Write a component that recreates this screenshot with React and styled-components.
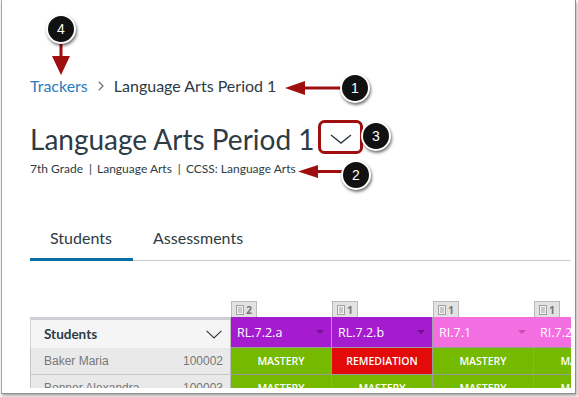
import React from "react";
import styled, { createGlobalStyle } from "styled-components";

const GlobalStyle = createGlobalStyle`
  html, body { margin: 0; padding: 0; background: #ffffff; }
  body { font-family: Lato, "Noto Sans", sans-serif; color: #2d3b45; }
  * { box-sizing: border-box; }
`;

const Page = styled.div`
  position: relative;
  width: 578px;
  height: 397px;
  overflow: hidden;
`;

const Frame = styled.div`
  margin-left: 1px;
  width: 575px;
  height: 394px;
  border-left: 1px solid #a6a6a6;
  border-right: 1px solid #8e8e8e;
  border-bottom: 1px solid #8e8e8e;
  box-shadow: 1px 2px 3px rgba(0, 0, 0, 0.35);
  padding: 0 4px 5px 0;
  background: #fff;
`;

const Viewport = styled.div`
  height: 100%;
  overflow: hidden;
  padding-left: 28px;
  display: flex;
  flex-direction: column;
`;

const Breadcrumb = styled.nav`
  margin-top: 76px;
  display: flex;
  align-items: center;
  height: 20px;
  font-size: 16px;
  line-height: 20px;
`;

const Crumb = styled.span`
  color: ${(p) => (p.$link ? "#2b7abc" : "#2d3b45")};
`;

const CrumbSep = styled.svg`
  width: 6px;
  height: 10px;
  margin: 0 10px;
`;

const TitleRow = styled.div`
  margin-top: 25px;
  display: flex;
  align-items: center;
  height: 36px;
`;

const Title = styled.h1`
  margin: 0;
  font-size: 28px;
  line-height: 36px;
  font-weight: 400;
  color: #2d3b45;
`;

const TitleToggle = styled.button`
  margin-left: 6px;
  width: 40px;
  height: 30px;
  border: none;
  background: transparent;
  padding: 0;
  display: flex;
  align-items: center;
  justify-content: center;
`;

const Meta = styled.div`
  margin-top: 4px;
  font-size: 12px;
  line-height: 16px;
  color: #2d3b45;
  display: flex;
`;

const MetaSep = styled.span`
  padding: 0 5px 0 6px;
`;

const TabList = styled.div`
  margin-top: 51px;
  display: flex;
  border-bottom: 1px solid #c7cdd1;
`;

const Tab = styled.div`
  padding: 0 20px 10px;
  font-size: 16px;
  line-height: 20px;
  color: #2d3b45;
  border-bottom: 3px solid ${(p) => (p.$active ? "#0770a3" : "transparent")};
  margin-bottom: -1px;
  width: ${(p) => (p.$w ? `${p.$w}px` : "auto")};
`;

const Table = styled.div`
  margin-top: 38px;
  display: flex;
  flex-direction: column;
  width: max-content;
  flex-shrink: 0;
`;

const BadgeRow = styled.div`
  display: flex;
  height: 18px;
  padding-left: 201px;
`;

const BadgeSlot = styled.div`
  width: 101px;
`;

const Badge = styled.div`
  display: inline-flex;
  align-items: center;
  gap: 2px;
  height: 18px;
  padding: 0 4px 0 4px;
  background: #e2e2e2;
  border: 1px solid #b9b9b9;
  border-bottom: none;
  font-family: "Open Sans", sans-serif;
  font-weight: 700;
  font-size: 10.5px;
  color: #777777;
`;

const Row = styled.div`
  display: flex;
`;

const StudentHead = styled.div`
  width: 201px;
  height: 31px;
  border-top: 3px solid #ccd0d4;
  border-left: 1px solid #d6d6d6;
  border-right: 1px solid #bdbdbd;
  background: #f5f5f6;
  display: flex;
  align-items: center;
  justify-content: space-between;
  padding: 0 8px 0 13px;
  font-weight: 700;
  font-size: 13.5px;
  color: #2d3b45;
`;

const colColor = { purple: "#a51ccf", pink: "#f36ee0" };
const arrowColor = { purple: "rgba(60,0,80,0.45)", pink: "rgba(120,20,100,0.35)" };

const ColHead = styled.div`
  width: 101px;
  height: 31px;
  background: ${(p) => colColor[p.$tone]};
  border-right: 1px solid #a3a3a3;
  border-bottom: 1px solid #9c9c9c;
  display: flex;
  align-items: center;
  justify-content: space-between;
  padding: 0 7px 0 6px;
  font-family: "Open Sans", sans-serif;
  font-size: 12.5px;
  color: #ffffff;
`;

const HeadCaret = styled.span`
  width: 0;
  height: 0;
  border-left: 4px solid transparent;
  border-right: 4px solid transparent;
  border-top: 4px solid ${(p) => arrowColor[p.$tone]};
`;

const StudentCell = styled.div`
  width: 201px;
  height: 27px;
  background: #e9e9e9;
  border-left: 1px solid #c6c6c6;
  border-right: 1px solid #bdbdbd;
  border-bottom: 1px solid #c8c8c8;
  display: flex;
  align-items: center;
  justify-content: space-between;
  padding: 0 7px 0 13px;
  font-family: "Liberation Sans", Arial, sans-serif;
  font-size: 12px;
  color: #777777;
  white-space: nowrap;
`;

const resultColor = { mastery: "#75b900", remediation: "#e30a0a" };

const ResultCell = styled.div`
  width: 101px;
  height: 27px;
  background: ${(p) => resultColor[p.$result]};
  border-right: 1px solid #9a9a9a;
  border-bottom: 1px solid #9a9a9a;
  display: flex;
  align-items: center;
  justify-content: center;
  font-family: "Open Sans", sans-serif;
  font-weight: 600;
  font-size: 10.5px;
  color: #ffffff;
  text-transform: uppercase;
`;

/* annotation overlay */
const Overlay = styled.svg`
  position: absolute;
  left: 0;
  top: 0;
  width: 578px;
  height: 397px;
  pointer-events: none;
`;

const Callout = styled.div`
  position: absolute;
  left: ${(p) => p.$x - 15}px;
  top: ${(p) => p.$y - 15}px;
  width: 30px;
  height: 30px;
  border-radius: 50%;
  background: #111111;
  border: 2px solid #ffffff;
  box-shadow: 1px 2px 3px rgba(0, 0, 0, 0.55);
  color: #ffffff;
  font-family: "Liberation Sans", Arial, sans-serif;
  font-size: 14px;
  display: flex;
  align-items: center;
  justify-content: center;
`;

const columns = [
  { code: "RL.7.2.a", count: 2, tone: "purple" },
  { code: "RL.7.2.b", count: 1, tone: "purple" },
  { code: "RI.7.1", count: 1, tone: "pink" },
  { code: "RI.7.2", count: 1, tone: "pink" },
];

const students = [
  { name: "Baker Maria", id: "100002", results: ["mastery", "remediation", "mastery", "mastery"] },
  { name: "Bonner Alexandra", id: "100003", results: ["mastery", "mastery", "mastery", "mastery"] },
];

const DocIcon = () => (
  <svg width="8" height="10" viewBox="0 0 8 10">
    <rect x="0.5" y="0.5" width="7" height="9" fill="#f2f2f2" stroke="#a0a0a0" />
    <line x1="2" y1="3" x2="6" y2="3" stroke="#a0a0a0" />
    <line x1="2" y1="5" x2="6" y2="5" stroke="#a0a0a0" />
    <line x1="2" y1="7" x2="6" y2="7" stroke="#a0a0a0" />
  </svg>
);

const RED = "#a00f0f";

export default function App() {
  return (
    <Page>
      <GlobalStyle />
      <Frame>
        <Viewport>
          <Breadcrumb>
            <Crumb $link>Trackers</Crumb>
            <CrumbSep viewBox="0 0 6 10">
              <path d="M0.8 0.8 L5 5 L0.8 9.2" fill="none" stroke="#6b7780" strokeWidth="1.3" />
            </CrumbSep>
            <Crumb>Language Arts Period 1</Crumb>
          </Breadcrumb>
          <TitleRow>
            <Title>Language Arts Period 1</Title>
            <TitleToggle aria-label="Switch tracker">
              <svg width="22" height="10" viewBox="0 0 22 10">
                <path d="M1 1 L11 9 L21 1" fill="none" stroke="#2d3b45" strokeWidth="1.4" />
              </svg>
            </TitleToggle>
          </TitleRow>
          <Meta>
            <span>7th Grade</span>
            <MetaSep>|</MetaSep>
            <span>Language Arts</span>
            <MetaSep>|</MetaSep>
            <span>CCSS: Language Arts</span>
          </Meta>
          <TabList>
            <Tab $active $w={103}>Students</Tab>
            <Tab>Assessments</Tab>
          </TabList>
          <Table>
            <BadgeRow>
              {columns.map((c) => (
                <BadgeSlot key={c.code}>
                  <Badge>
                    <DocIcon />
                    {c.count}
                  </Badge>
                </BadgeSlot>
              ))}
            </BadgeRow>
            <Row>
              <StudentHead>
                Students
                <svg width="16" height="9" viewBox="0 0 16 9">
                  <path d="M0.6 0.8 L8 8 L15.4 0.8" fill="none" stroke="#333" strokeWidth="1.1" />
                </svg>
              </StudentHead>
              {columns.map((c) => (
                <ColHead key={c.code} $tone={c.tone}>
                  {c.code}
                  <HeadCaret $tone={c.tone} />
                </ColHead>
              ))}
            </Row>
            {students.map((s) => (
              <Row key={s.id}>
                <StudentCell>
                  <span>{s.name}</span>
                  <span>{s.id}</span>
                </StudentCell>
                {s.results.map((r, i) => (
                  <ResultCell key={i} $result={r}>
                    {r}
                  </ResultCell>
                ))}
              </Row>
            ))}
          </Table>
        </Viewport>
      </Frame>

      <Overlay viewBox="0 0 578 397">
        <rect x="59.5" y="42" width="3" height="16" fill={RED} />
        <polygon points="52,56 70,56 61,75" fill={RED} />
        <rect x="303" y="86.5" width="40" height="3" fill={RED} />
        <polygon points="285,88 305,81 305,95" fill={RED} />
        <rect x="316" y="170" width="28" height="3" fill={RED} />
        <polygon points="298,171.5 318,165 318,178" fill={RED} />
        <rect x="319.5" y="121.5" width="42" height="31" rx="5" fill="none" stroke={RED} strokeWidth="3" />
      </Overlay>
      <Callout $x={61} $y={29}>4</Callout>
      <Callout $x={355} $y={88}>1</Callout>
      <Callout $x={376} $y={136}>3</Callout>
      <Callout $x={356} $y={175}>2</Callout>
    </Page>
  );
}
